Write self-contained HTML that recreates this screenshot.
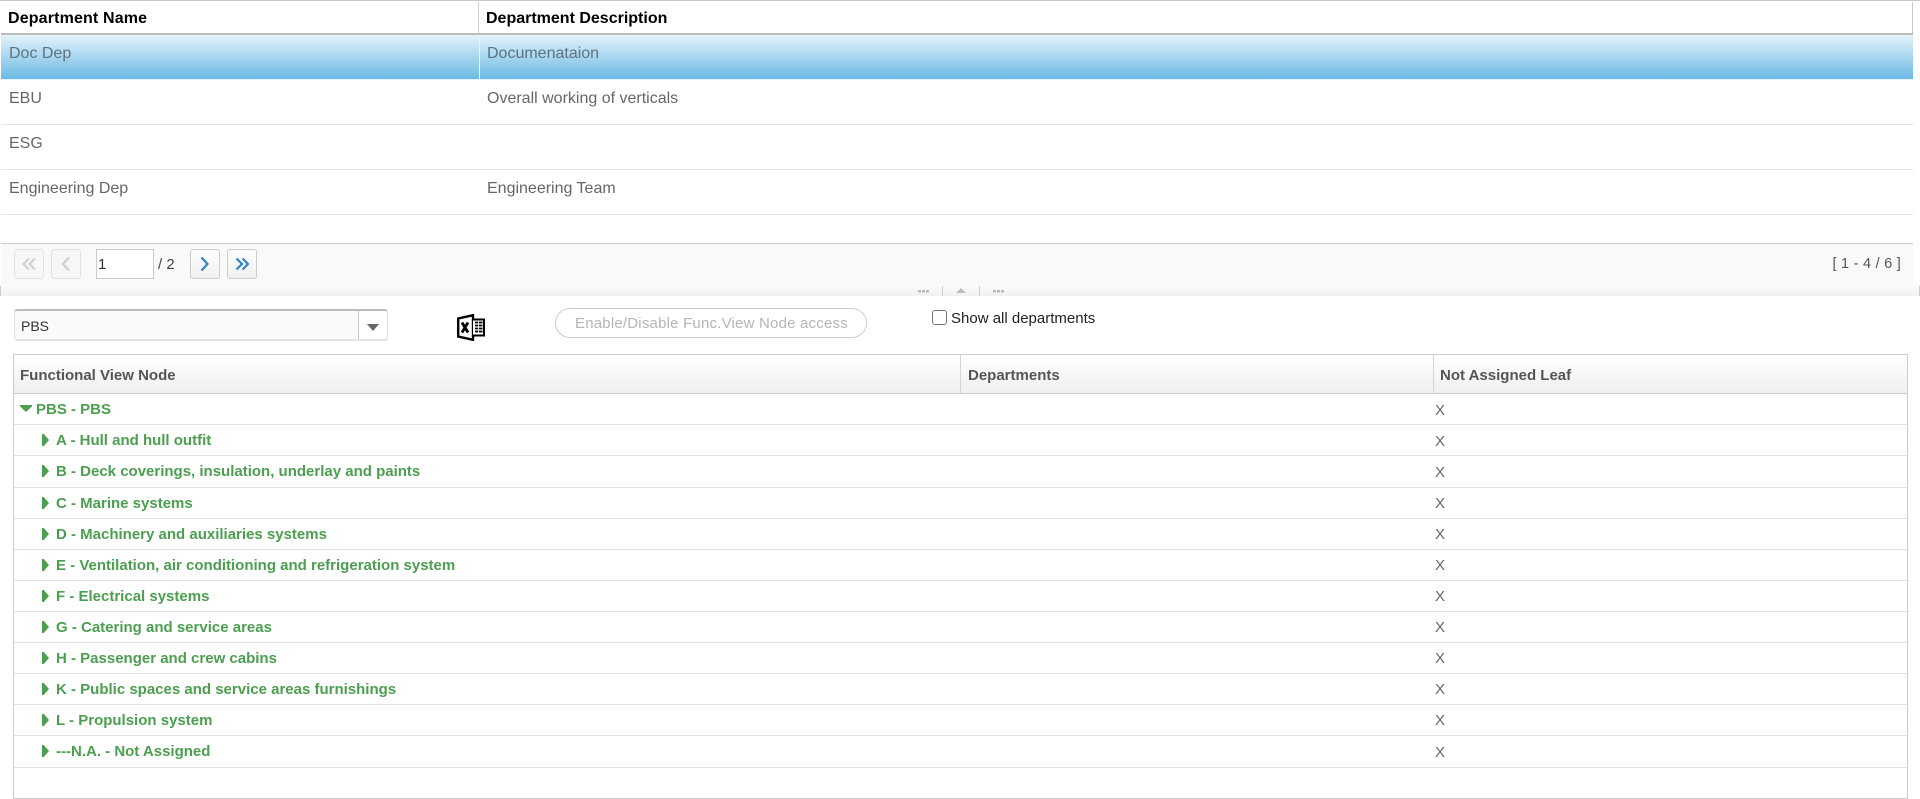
<!DOCTYPE html>
<html><head><meta charset="utf-8"><title>Departments</title>
<style>
html,body{margin:0;padding:0;background:#fff;width:1920px;height:799px;overflow:hidden}
body{position:relative;font-family:"Liberation Sans",Arial,sans-serif}
div,span,svg{position:absolute;box-sizing:border-box}
.t{white-space:nowrap;height:20px;line-height:20px}
.h{font-size:16px;font-weight:bold;color:#000}
.c{font-size:16px;color:#666}
.l{left:1px;width:1912px;height:1px;background:#e4e4e4}
.b{width:30px;height:30px;top:249px;border:1px solid #ccc;border-radius:3px;background:linear-gradient(#fff,#f0f0f0)}
.d{background:#f7f7f7;border-color:#e2e2e2}
.th{font-size:15px;font-weight:bold;color:#555;top:366px}
.g{font-size:15px;font-weight:bold;color:#4c9f50;left:56px}
.x{font-size:15px;color:#666;left:1435px}
.r{left:14px;width:1893px;height:1px;background:#e2e2e2}
.a{left:42px;width:7px;height:12px;background:#4c9f50;clip-path:polygon(0 0,25% 0,100% 50%,25% 100%,0 100%)}
</style></head><body>

<div style="left:0;top:0;width:1920px;height:1px;background:#c8c8c8"></div>
<div style="left:478px;top:2px;width:1px;height:32px;background:#d2d2d2"></div>
<div style="left:1912px;top:2px;width:1px;height:32px;background:#c8c8c8"></div>
<div style="left:1px;top:33px;width:1912px;height:2px;background:#bcbcbc"></div>
<div class="t h" style="left:8px;top:9px;letter-spacing:.15px">Department Name</div>
<div class="t h" style="left:486px;top:9px">Department Description</div>

<div style="left:1px;top:35px;width:1912px;height:44px;background:linear-gradient(#e3f3fb,#6bb9e4)"></div>
<div style="left:1px;top:79px;width:1912px;height:1px;background:#e2f3fb"></div>
<div style="left:479px;top:35px;width:1px;height:44px;background:#e8f5fb"></div>
<div class="t c" style="left:9px;top:44px;color:#5d7280">Doc Dep</div>
<div class="t c" style="left:487px;top:44px;color:#5d7280">Documenataion</div>
<div class="t c" style="left:9px;top:89px">EBU</div>
<div class="t c" style="left:487px;top:89px">Overall working of verticals</div>
<div class="l" style="top:124px"></div>
<div class="t c" style="left:9px;top:134px">ESG</div>
<div class="l" style="top:169px"></div>
<div class="t c" style="left:9px;top:179px">Engineering Dep</div>
<div class="t c" style="left:487px;top:179px">Engineering Team</div>
<div class="l" style="top:214px"></div>

<div style="left:1px;top:243px;width:1912px;height:41px;background:#f9f9f9;border-top:1px solid #ccc"></div>
<div class="b d" style="left:14px"></div>
<div class="b d" style="left:51px"></div>
<div style="left:96px;top:249px;width:58px;height:30px;background:#fff;border:1px solid #ccc"></div>
<div class="t" style="left:98px;top:255px;font-size:15px;color:#333">1</div>
<div class="t" style="left:158px;top:255px;font-size:15px;color:#444">/ 2</div>
<div class="b" style="left:190px"></div>
<div class="b" style="left:227px"></div>
<svg style="left:14px;top:249px" width="250" height="30" fill="none" stroke-width="2.200">
<path d="M15 9.500L9.500 15L15 20.500M21 9.500L15.500 15L21 20.500" stroke="#cfcfcf"/>
<path d="M55 8.500L49 15L55 21.500" stroke="#cfcfcf"/>
<path d="M187.500 8.500L193.500 15L187.500 21.500" stroke="#2f86c4"/>
<path d="M222.500 9.500L228 15L222.500 20.500M228.500 9.500L234 15L228.500 20.500" stroke="#2f86c4"/>
</svg>
<div class="t" style="right:19px;top:254px;font-size:14.500px;color:#555;letter-spacing:.25px">[ 1 - 4 / 6 ]</div>

<div style="left:0;top:284px;width:1920px;height:12px;background:linear-gradient(#fdfdfd,#f1f1f1)"></div>
<div style="left:0;top:286px;width:1px;height:10px;background:#ccc"></div>
<div style="left:1919px;top:286px;width:1px;height:10px;background:#ccc"></div>
<div style="left:942px;top:286px;width:1px;height:10px;background:#ccc"></div>
<div style="left:979px;top:286px;width:1px;height:10px;background:#ccc"></div>
<svg style="left:915px;top:286px" width="95" height="10"><g fill="#bbb"><rect x="3" y="4" width="3" height="2.500"/><rect x="7" y="4" width="3" height="2.500"/><rect x="11" y="4" width="3" height="2.500"/><rect x="78" y="4" width="3" height="2.500"/><rect x="82" y="4" width="3" height="2.500"/><rect x="86" y="4" width="3" height="2.500"/><path d="M41 7L46 2L51 7Z"/></g></svg>

<div style="left:14px;top:309px;width:374px;height:32px;background:#fafafa;border:1px solid #e0e0e0;border-top:2px solid #bbb;border-bottom:2px solid #e4e4e4;border-radius:3px"></div>
<div style="left:358px;top:311px;width:29px;height:28px;background:#fff;border-left:1px solid #c8c8c8;border-radius:0 3px 3px 0"></div>
<div class="t" style="left:21px;top:316px;font-size:14px;color:#333">PBS</div>
<div style="left:367px;top:324px;width:0;height:0;border-top:7px solid #666;border-left:6px solid transparent;border-right:6px solid transparent"></div>

<svg style="left:457px;top:314px" width="28" height="27" viewBox="0 0 28 27">
<path d="M1.200 4.500L16 1.200V25.800L1.200 22.500Z" fill="#fff" stroke="#000" stroke-width="2.400"/>
<path d="M5 8.500L11 18.500M11 8.500L5 18.500" stroke="#000" stroke-width="2.800" fill="none"/>
<path d="M16 5.500H27V21.500H16" fill="#fff" stroke="#000" stroke-width="2"/>
<path d="M18 8.500H25.500M18 11.500H25.500M18 14.500H25.500M18 17.500H25.500" stroke="#000" stroke-width="1.800"/>
<path d="M21.500 7V20" stroke="#fff" stroke-width=".8"/>
</svg>

<div style="left:555px;top:308px;width:312px;height:30px;border:1px solid #ccc;border-radius:15px;background:#fff"></div>
<div class="t" style="left:575px;top:314px;font-size:15px;color:#b5b5b5;letter-spacing:.2px">Enable/Disable Func.View Node access</div>

<div style="left:932px;top:310px;width:15px;height:15px;border:1px solid #767676;border-radius:3px;background:#fff"></div>
<div class="t" style="left:951px;top:309px;font-size:15px;color:#222">Show all departments</div>

<div style="left:13px;top:354px;width:1895px;height:445px;border:1px solid #ccc"></div>
<div style="left:14px;top:355px;width:1893px;height:39px;background:linear-gradient(#fff,#efefef);border-bottom:1px solid #ccc"></div>
<div style="left:960px;top:355px;width:1px;height:38px;background:#d4d4d4"></div>
<div style="left:1433px;top:355px;width:1px;height:38px;background:#d4d4d4"></div>
<div class="t th" style="left:20px">Functional View Node</div>
<div class="t th" style="left:968px">Departments</div>
<div class="t th" style="left:1440px">Not Assigned Leaf</div>

<div style="left:20px;top:405px;width:12px;height:7px;background:#4c9f50;clip-path:polygon(0 0,100% 0,100% 20%,50% 100%,0 20%)"></div>
<div class="t g" style="left:36px;top:400px">PBS - PBS</div><div class="t x" style="top:401px">X</div><div class="r" style="top:424px"></div>
<div class="a" style="top:434px"></div><div class="t g" style="top:431px">A - Hull and hull outfit</div><div class="t x" style="top:432px">X</div><div class="r" style="top:455px"></div>
<div class="a" style="top:465px"></div><div class="t g" style="top:462px">B - Deck coverings, insulation, underlay and paints</div><div class="t x" style="top:463px">X</div><div class="r" style="top:487px"></div>
<div class="a" style="top:497px"></div><div class="t g" style="top:494px">C - Marine systems</div><div class="t x" style="top:494px">X</div><div class="r" style="top:518px"></div>
<div class="a" style="top:528px"></div><div class="t g" style="top:525px">D - Machinery and auxiliaries systems</div><div class="t x" style="top:525px">X</div><div class="r" style="top:549px"></div>
<div class="a" style="top:559px"></div><div class="t g" style="top:556px">E - Ventilation, air conditioning and refrigeration system</div><div class="t x" style="top:556px">X</div><div class="r" style="top:580px"></div>
<div class="a" style="top:590px"></div><div class="t g" style="top:587px">F - Electrical systems</div><div class="t x" style="top:587px">X</div><div class="r" style="top:611px"></div>
<div class="a" style="top:621px"></div><div class="t g" style="top:618px">G - Catering and service areas</div><div class="t x" style="top:618px">X</div><div class="r" style="top:642px"></div>
<div class="a" style="top:652px"></div><div class="t g" style="top:649px">H - Passenger and crew cabins</div><div class="t x" style="top:649px">X</div><div class="r" style="top:673px"></div>
<div class="a" style="top:683px"></div><div class="t g" style="top:680px">K - Public spaces and service areas furnishings</div><div class="t x" style="top:680px">X</div><div class="r" style="top:704px"></div>
<div class="a" style="top:714px"></div><div class="t g" style="top:711px">L - Propulsion system</div><div class="t x" style="top:711px">X</div><div class="r" style="top:735px"></div>
<div class="a" style="top:745px"></div><div class="t g" style="top:742px">---N.A. - Not Assigned</div><div class="t x" style="top:743px">X</div><div class="r" style="top:767px"></div>
</body></html>
